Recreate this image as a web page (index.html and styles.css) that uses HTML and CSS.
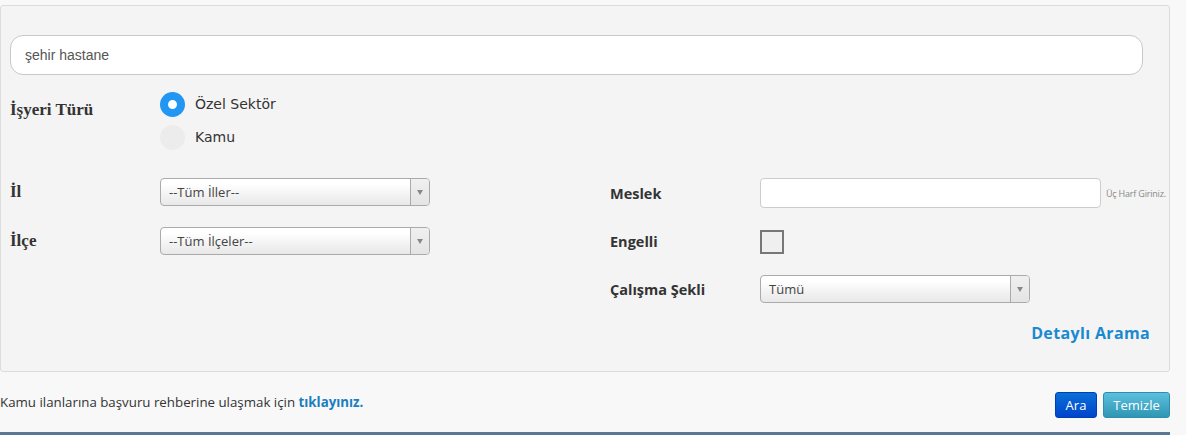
FILE: index.html
```html
<!DOCTYPE html>
<html lang="tr">
<head>
<meta charset="utf-8">
<title>İş Arama</title>
<link rel="stylesheet" href="styles.css">
</head>
<body>
<div class="page">
  <div class="panel">
    <div class="search">şehir hastane</div>

    <div class="type-row">
      <div class="label serif">İşyeri Türü</div>
      <div class="radios">
        <div class="radio-item"><span class="radio on"></span><span class="radio-text">Özel Sektör</span></div>
        <div class="radio-item"><span class="radio"></span><span class="radio-text">Kamu</span></div>
      </div>
    </div>

    <div class="cols">
      <div class="col">
        <div class="field">
          <div class="label serif">İl</div>
          <div class="select"><span class="select-text">--Tüm İller--</span><span class="select-arrow"><span class="tri"></span></span></div>
        </div>
        <div class="field">
          <div class="label serif">İlçe</div>
          <div class="select"><span class="select-text">--Tüm İlçeler--</span><span class="select-arrow"><span class="tri"></span></span></div>
        </div>
      </div>
      <div class="col right">
        <div class="field">
          <div class="label sans">Meslek</div>
          <div class="text-input"></div>
          <span class="hint">Üç Harf Giriniz.</span>
        </div>
        <div class="field">
          <div class="label sans">Engelli</div>
          <span class="checkbox"></span>
        </div>
        <div class="field">
          <div class="label sans">Çalışma Şekli</div>
          <div class="select"><span class="select-text">Tümü</span><span class="select-arrow"><span class="tri"></span></span></div>
        </div>
      </div>
    </div>

    <div class="detail-row"><a class="detail">Detaylı Arama</a></div>
  </div>

  <div class="footer">
    <div class="note">Kamu ilanlarına başvuru rehberine ulaşmak için <a class="note-link">tıklayınız.</a></div>
    <div class="buttons">
      <button class="btn btn-primary">Ara</button>
      <button class="btn btn-info">Temizle</button>
    </div>
  </div>
  <div class="bar"></div>
</div>
</body>
</html>
```

FILE: styles.css
```css
html, body {
  margin: 0;
  padding: 0;
  background: #f8f8f8;
}
body {
  font-family: "Open Sans", "DejaVu Sans", sans-serif;
  color: #333;
  height: 435px;
  overflow: hidden;
}
.page {
  width: 1170px;
  padding-top: 5px;
}
.panel {
  background: #f4f4f4;
  border: 1px solid #dcdcdc;
  border-radius: 3px;
  height: 367px;
  box-sizing: border-box;
  padding: 29px 0 0 9px;
}
.search {
  width: 1133px;
  height: 40px;
  box-sizing: border-box;
  border: 1px solid #c8c8c8;
  border-radius: 13px;
  background: #fff;
  font-family: "Liberation Sans", Arial, sans-serif;
  font-size: 14px;
  color: #555;
  line-height: 38px;
  padding-left: 14px;
}
.type-row {
  display: flex;
  margin-top: 17px;
}
.label {
  width: 150px;
  flex: none;
  font-weight: bold;
  color: #333;
}
.serif {
  font-family: "Liberation Serif", "Times New Roman", serif;
  font-size: 17px;
}
.sans {
  font-family: "Open Sans", sans-serif;
  font-size: 14.5px;
  font-weight: 700;
  color: #333;
}
.type-row .label {
  padding-top: 8px;
}
.radios {
  display: flex;
  flex-direction: column;
  gap: 8px;
}
.radio-item {
  display: flex;
  align-items: center;
  height: 25px;
}
.radio {
  width: 25px;
  height: 25px;
  border-radius: 50%;
  background: #ececec;
  box-sizing: border-box;
  flex: none;
}
.radio.on {
  background: #fff;
  border: 8px solid #2196f3;
}
.radio-text {
  font-family: "DejaVu Sans", sans-serif;
  font-size: 14px;
  color: #333;
  margin-left: 10px;
  margin-top: -1px;
}
.cols {
  display: flex;
  margin-top: 28px;
}
.col {
  width: 600px;
  flex: none;
  display: flex;
  flex-direction: column;
  gap: 21px;
}
.col.right {
  width: auto;
  flex: 1;
  gap: 20px;
}
.field {
  display: flex;
  align-items: center;
  min-height: 27px;
}
.select {
  width: 270px;
  height: 28px;
  box-sizing: border-box;
  border: 1px solid #aaa;
  border-radius: 4px;
  background: linear-gradient(#ffffff 20%, #f3f3f3 60%, #e8e8e8);
  display: flex;
  align-items: center;
  font-family: "Open Sans", sans-serif;
  font-size: 13px;
  color: #444;
}
.select-text {
  flex: 1;
  padding-left: 8px;
}
.select-arrow {
  width: 18px;
  height: 100%;
  border-left: 1px solid #aaa;
  display: flex;
  align-items: center;
  justify-content: center;
  background: linear-gradient(#f0f0f0, #e4e4e4);
  border-radius: 0 3px 3px 0;
}
.tri {
  width: 0;
  height: 0;
  border-left: 3px solid transparent;
  border-right: 3px solid transparent;
  border-top: 5px solid #888;
}
.text-input {
  width: 341px;
  height: 30px;
  box-sizing: border-box;
  border: 1px solid #ccc;
  border-radius: 4px;
  background: #fff;
  flex: none;
}
.hint {
  font-family: "Open Sans", sans-serif;
  font-size: 9px;
  letter-spacing: -0.2px;
  color: #888;
  margin-left: 5px;
  white-space: nowrap;
}
.checkbox {
  width: 24px;
  height: 24px;
  box-sizing: border-box;
  border: 2px solid #777;
  background: #efefef;
}
.detail-row {
  display: flex;
  justify-content: flex-end;
  padding-right: 19px;
  margin-top: 19px;
}
.detail {
  font-family: "Open Sans", sans-serif;
  font-size: 16px;
  letter-spacing: 0.35px;
  font-weight: 700;
  color: #1a8ad0;
}
.footer {
  display: flex;
  justify-content: space-between;
  align-items: flex-start;
  height: 60px;
}
.note {
  font-family: "Open Sans", sans-serif;
  font-size: 13.3px;
  color: #333;
  margin-top: 21px;
}
.note-link {
  font-weight: 700;
  color: #1a7fc0;
}
.buttons {
  display: flex;
  gap: 6px;
  margin-top: 20px;
}
.btn {
  height: 26px;
  border-radius: 3px;
  color: #fff;
  font-family: "Open Sans", sans-serif;
  font-size: 13px;
  padding: 0 9px;
  cursor: pointer;
}
.btn-primary {
  background: linear-gradient(#0a6fd6, #0044cc);
  border: 1px solid #0040b0;
  width: 42px;
}
.btn-info {
  background: linear-gradient(#5bc0de, #2f96b4);
  border: 1px solid #2d8fad;
  width: 67px;
}
.bar {
  height: 3px;
  background: #5a7893;
}
```
